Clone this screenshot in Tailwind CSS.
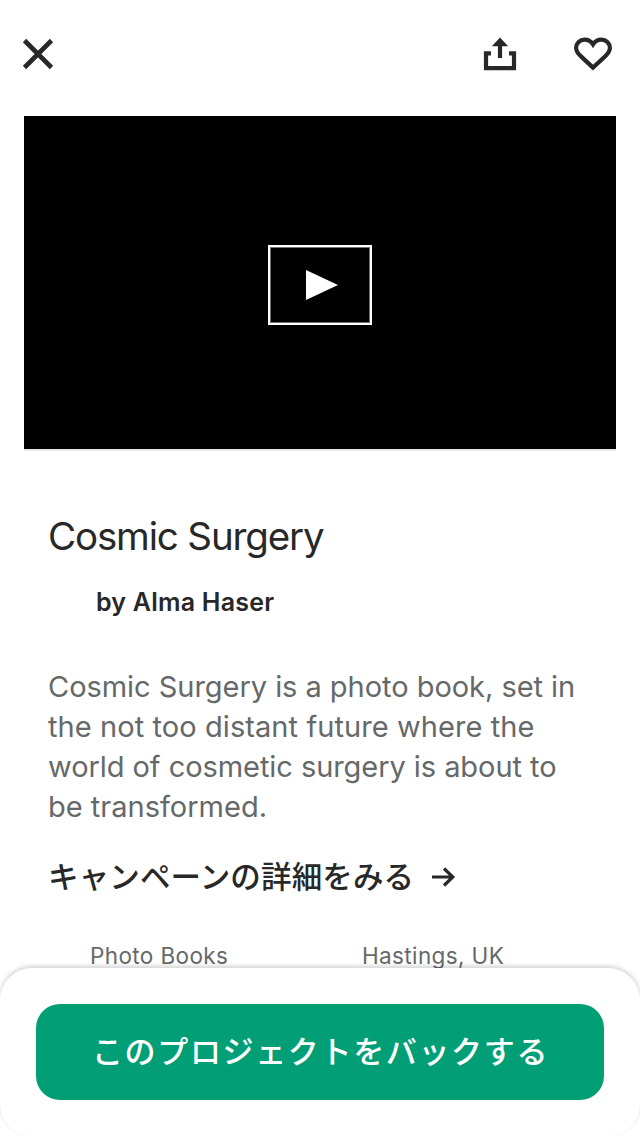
<!DOCTYPE html>
<html lang="ja">
<head>
<meta charset="utf-8">
<meta name="viewport" content="width=device-width, initial-scale=1">
<title>Cosmic Surgery</title>
<script src="https://cdn.jsdelivr.net/npm/@tailwindcss/browser@4"></script>
</head>
<body class="bg-white">
<div class="relative flex h-[1136px] w-[640px] flex-col overflow-hidden bg-white font-['Inter','Noto_Sans_CJK_JP',sans-serif] text-[#282828]">
  <header class="flex h-[116px] shrink-0 items-start justify-between pt-[34px] pr-[27px] pl-[18px]">
    <button aria-label="Close"><svg class="block size-10" viewBox="0 0 40 40" fill="none" stroke="#282828" stroke-width="4.6"><path d="M6.5 6.5 33.5 33.5M33.5 6.5 6.5 33.5"/></svg></button>
    <div class="flex gap-[53px]">
      <button aria-label="Share"><svg class="block size-10" viewBox="0 0 40 40" fill="none"><path d="M11 19.4H6V34.2H34V19.4H29" stroke="#282828" stroke-width="4.2"/><path d="M20 24V10" stroke="#282828" stroke-width="4.2"/><path d="M20 3.5 28.2 12.3H11.8Z" fill="#282828"/></svg></button>
      <button aria-label="Save"><svg class="block size-10" viewBox="0 0 40 40" fill="none" stroke="#282828" stroke-width="4.2"><path d="M20 33.6 8 22.4C5 19.5 3.1 17.3 3.1 13.9A8.4 8.4 0 0 1 11.5 5.6C15 5.6 18 7.1 20 10.3 22 7.1 25 5.6 28.5 5.6A8.4 8.4 0 0 1 36.9 13.9C36.9 17.3 35 19.5 32 22.4Z"/></svg></button>
    </div>
  </header>
  <section class="mx-6 flex h-[335px] shrink-0 items-start justify-center border-b-2 border-[#e6e6e6] bg-black pt-[129px]">
    <button aria-label="Play" class="flex h-20 w-[104px] items-center justify-center border-2 border-white shadow-[inset_0_0_0_1px_rgba(255,255,255,0.45)]"><svg class="ml-[3px] block h-[30px] w-8" viewBox="0 0 32 30"><path d="M0 0 32 15 0 30Z" fill="#fff"/></svg></button>
  </section>
  <main class="px-12 pt-[61px] whitespace-nowrap">
    <h1 class="text-[38.5px] leading-[48px] tracking-[-1.15px]">Cosmic Surgery</h1>
    <p class="mt-[26px] pl-12 text-[25px] leading-8 font-semibold tracking-[0.22px]">by Alma Haser</p>
    <p class="mt-[49px] text-[29px] leading-10 text-[#656969]"><span class="tracking-[-0.04px]">Cosmic Surgery is a photo book, set in</span><br><span class="tracking-[0.08px]">the not too distant future where the</span><br><span class="tracking-[-0.06px]">world of cosmetic surgery is about to</span><br><span>be transformed.</span></p>
    <a class="mt-[26px] flex h-[48px] items-center text-[30.5px] font-medium tracking-[0.15px]"><span>キャンペーンの詳細をみる</span><svg class="ml-[18px] block h-5 w-6" viewBox="0 0 24 20" fill="none" stroke="#282828" stroke-width="3.2"><path d="M0 10H21M12 1.5 20.8 10 12 18.5"/></svg></a>
    <div class="mt-[40px] flex text-[22.5px] leading-[30px] tracking-[0.38px] text-[#656969]"><span class="w-[272px] pl-[42px]">Photo Books</span><span class="pl-[42px]">Hastings, UK</span></div>
  </main>
  <footer class="absolute inset-x-0 bottom-0 h-[168px] rounded-[32px] bg-white px-9 pt-9 shadow-[0_-2px_4px_rgba(0,0,0,0.18)]">
    <button class="flex h-24 w-full items-center justify-center rounded-3xl bg-[#029f76] pl-px text-[31px] font-medium tracking-[1.65px] text-white">このプロジェクトをバックする</button>
  </footer>
</div>
</body>
</html>
